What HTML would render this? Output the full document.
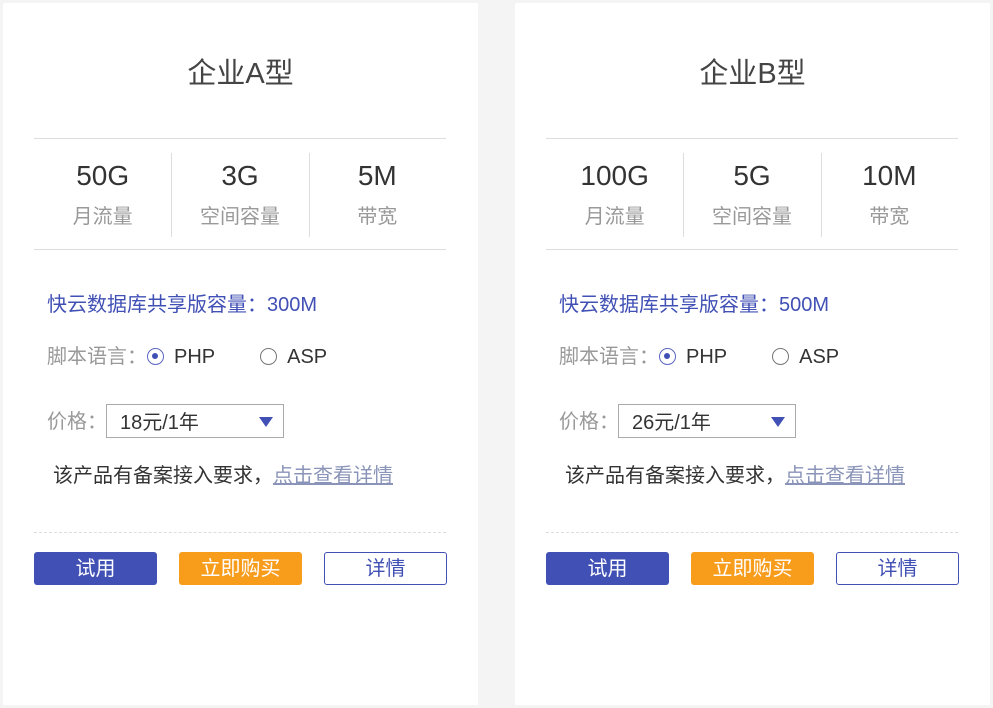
<!DOCTYPE html>
<html><head><meta charset="utf-8"><style>
*{margin:0;padding:0;box-sizing:border-box}
body{width:993px;height:708px;background:#f4f4f4;font-family:"Liberation Sans","Noto Sans CJK SC",sans-serif;position:relative;overflow:hidden}
.card{position:absolute;top:3px;width:475px;height:702px;background:#fff}
.t{position:absolute;left:0;width:100%;text-align:center;top:47px;font-size:29px;color:#444}
.stats{position:absolute;left:31px;width:412px;top:135px;height:112px;border-top:1px solid #ddd;border-bottom:1px solid #ddd;display:flex}
.col{flex:1;text-align:center;position:relative}
.col+.col:before{content:"";position:absolute;left:0;top:14px;height:84px;border-left:1px solid #ddd}
.n{margin-top:21px;font-size:28px;color:#333;line-height:32px}
.l{margin-top:13px;font-size:20px;color:#999;line-height:24px}
.a{position:absolute;font-size:20px;line-height:24px;white-space:nowrap}
.blue{color:#4150b5}
.g{color:#999}
.r{display:inline-block;width:17px;height:17px;border:1.5px solid #777;border-radius:50%;vertical-align:-2px;margin-right:10px;position:relative}
.r.on{border-color:#5a65c0}
.r.on:after{content:"";position:absolute;left:4px;top:4px;width:6px;height:6px;border-radius:50%;background:#4150b5}
.sel{position:absolute;left:103px;top:401px;width:178px;height:34px;border:1px solid #aaa;font-size:20px;color:#333;padding:1px 0 0 13px}
.sel:after{content:"";position:absolute;right:10px;top:12px;border-left:7px solid transparent;border-right:7px solid transparent;border-top:10px solid #4150b5}
.lk{color:#8a94b8;text-decoration:underline}
.hr{position:absolute;left:31px;width:412px;top:529px;border-top:1px dashed #ddd}
.b{position:absolute;top:549px;width:123px;height:33px;border-radius:3px;font-size:20px;text-align:center;line-height:35px}
</style></head><body>
<div class="card" style="left:3px">
<div class="t">企业A型</div>
<div class="stats"><div class="col"><div class="n">50G</div><div class="l">月流量</div></div><div class="col"><div class="n">3G</div><div class="l">空间容量</div></div><div class="col"><div class="n">5M</div><div class="l">带宽</div></div></div>
<div class="a blue" style="left:44px;top:290px">快云数据库共享版容量：300M</div>
<div class="a g" style="left:44px;top:342px">脚本语言：<span class="r on"></span><span style="color:#333">PHP</span><span class="r" style="margin-left:45px"></span><span style="color:#333">ASP</span></div>
<div class="a g" style="left:44px;top:407px">价格：</div>
<div class="sel">18元/1年</div>
<div class="a" style="left:50px;top:461px;color:#333">该产品有备案接入要求，<span class="lk">点击查看详情</span></div>
<div class="hr"></div>
<div class="b" style="left:31px;background:#4150b5;color:#fff">试用</div>
<div class="b" style="left:176px;background:#f89c1c;color:#fff">立即购买</div>
<div class="b" style="left:321px;border:1px solid #4150b5;color:#4150b5;line-height:33px">详情</div>
</div>
<div class="card" style="left:515px">
<div class="t">企业B型</div>
<div class="stats"><div class="col"><div class="n">100G</div><div class="l">月流量</div></div><div class="col"><div class="n">5G</div><div class="l">空间容量</div></div><div class="col"><div class="n">10M</div><div class="l">带宽</div></div></div>
<div class="a blue" style="left:44px;top:290px">快云数据库共享版容量：500M</div>
<div class="a g" style="left:44px;top:342px">脚本语言：<span class="r on"></span><span style="color:#333">PHP</span><span class="r" style="margin-left:45px"></span><span style="color:#333">ASP</span></div>
<div class="a g" style="left:44px;top:407px">价格：</div>
<div class="sel">26元/1年</div>
<div class="a" style="left:50px;top:461px;color:#333">该产品有备案接入要求，<span class="lk">点击查看详情</span></div>
<div class="hr"></div>
<div class="b" style="left:31px;background:#4150b5;color:#fff">试用</div>
<div class="b" style="left:176px;background:#f89c1c;color:#fff">立即购买</div>
<div class="b" style="left:321px;border:1px solid #4150b5;color:#4150b5;line-height:33px">详情</div>
</div>
</body></html>
